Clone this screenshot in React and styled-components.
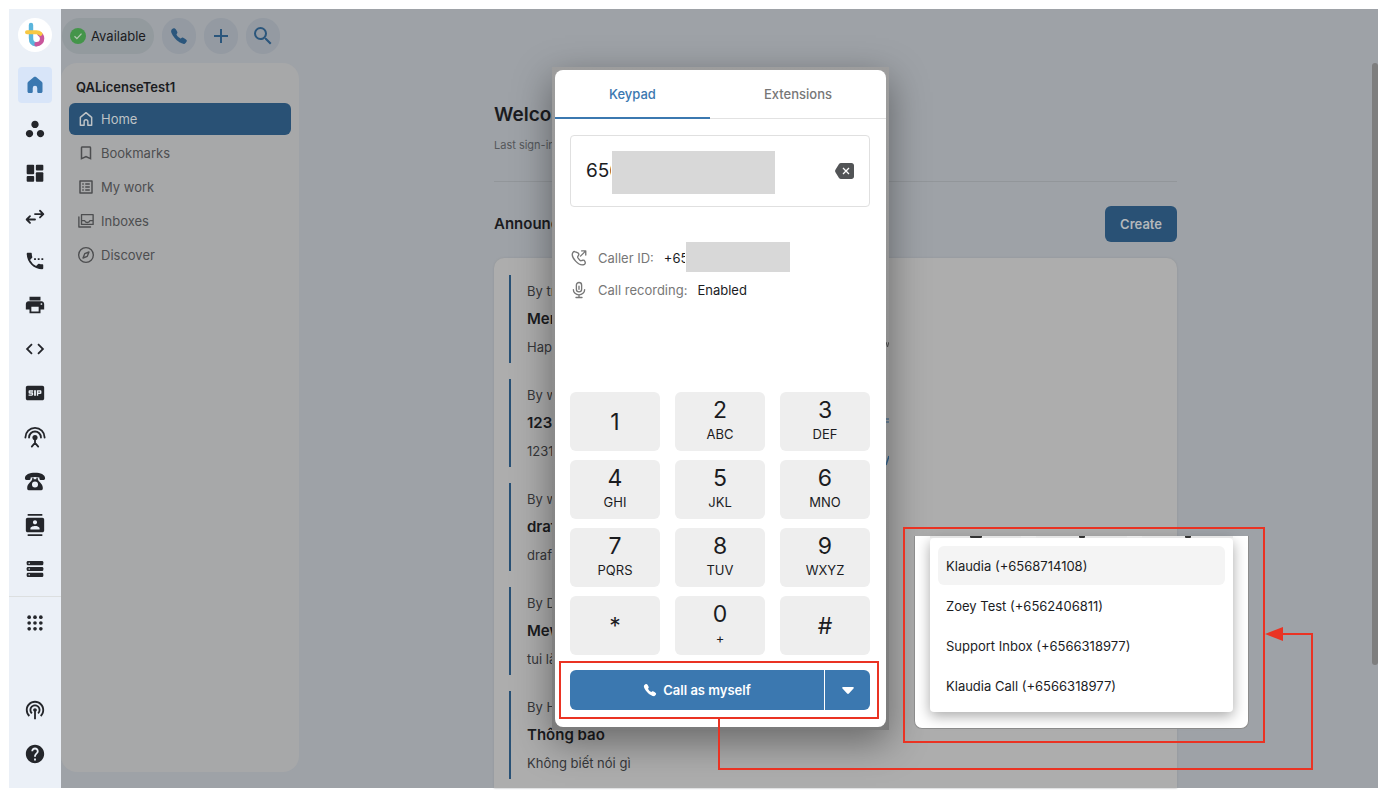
import { useState } from "react";
import styled, { createGlobalStyle, css } from "styled-components";
import {
  MdWorkspaces,
  MdSettingsPhone,
  MdPrint,
  MdCode,
  MdSip,
  MdContacts,
  MdPodcasts,
  MdHelp,
  MdAdd,
  MdSearch,
  MdBookmarkBorder,
  MdListAlt,
} from "react-icons/md";
import { IoCall } from "react-icons/io5";

const colors = {
  blue: "#3b78b0",
  dimBlue: "#295175",
  red: "#ea3323",
  rail: "#ebf0f7",
  backdrop: "#9ea2a7",
  panel: "#a7a8a9",
  card: "#adadad",
  ink: "#1b1c1f",
};

const GlobalStyle = createGlobalStyle`
  * {
    box-sizing: border-box;
  }
  body {
    margin: 0;
    background: #fff;
    font-family: Inter, "Liberation Sans", sans-serif;
    font-size: 13px;
    line-height: 20px;
    color: ${colors.ink};
  }
  button, input {
    font: inherit;
    color: inherit;
    border: 0;
    padding: 0;
    background: none;
  }
  button {
    cursor: pointer;
  }
  h1, h2, h3, p, ul, dl, dd {
    margin: 0;
    padding: 0;
  }
  a {
    color: inherit;
    text-decoration: none;
  }
  svg {
    display: block;
    flex: none;
  }
`;

const Page = styled.div`
  display: flex;
  height: 100vh;
  padding: 9px 4px 4px 9px;
`;

/* ---------- icons ---------- */

const Glyph = ({ size = 20, box = 24, children }) => (
  <svg width={size} height={size} viewBox={`0 0 ${box} ${box}`} fill="none" stroke="currentColor" strokeWidth="1.8" strokeLinecap="round" strokeLinejoin="round" aria-hidden="true">
    {children}
  </svg>
);

const Logo = () => (
  <svg width="22" height="26" viewBox="0 0 22 26" fill="none" aria-hidden="true">
    <path d="M7 3v13c0 4 1.800 6 5 6.200" stroke="#5bb5dc" strokeWidth="4.400" strokeLinecap="round" />
    <path d="M15.500 12c1.800 1 2.600 2.600 2.600 4.500 0 3.300-2.300 5.700-5.600 5.700" stroke="#c9569c" strokeWidth="4.400" strokeLinecap="round" />
    <path d="M3 10.200h9.500c1.700 0 3 .5 4 1.600" stroke="#f7c843" strokeWidth="4" strokeLinecap="round" />
  </svg>
);

const HomeSolid = () => (
  <Glyph size={20}>
    <path d="M12 2c.5 0 .9.2 1.300.5l6.800 5.500c.6.5.9 1.100.9 1.800v9.900c0 1-.8 1.800-1.800 1.800h-3.500c-.6 0-1-.4-1-1v-4.800a2.700 2.700 0 0 0-5.400 0v4.800c0 .6-.4 1-1 1H4.800c-1 0-1.800-.8-1.800-1.800V9.800c0-.7.3-1.300.9-1.800l6.800-5.500c.4-.3.8-.5 1.300-.5z" fill="currentColor" stroke="none" />
  </Glyph>
);

const HomeLine = () => (
  <Glyph size={16}>
    <path d="M3.500 9.500 12 2.500l8.500 7V21.500h-5.700v-5.700a2.800 2.800 0 0 0-5.600 0v5.700H3.500z" strokeWidth="2.200" />
  </Glyph>
);

const Tiles = () => (
  <Glyph size={20}>
    <g fill="currentColor" stroke="none">
      <rect x="2" y="2" width="9" height="11.500" rx="1.200" />
      <rect x="13" y="2" width="9" height="7" rx="1.200" />
      <rect x="2" y="15.500" width="9" height="7" rx="1.200" />
      <rect x="13" y="11" width="9" height="11.500" rx="1.200" />
    </g>
  </Glyph>
);

const Disks = () => (
  <Glyph size={20}>
    {[3, 10, 17].map((y) => (
      <g key={y} stroke="none">
        <rect x="2" y={y - 0.500} width="20" height="5" rx="1.500" fill="currentColor" />
        <circle cx="5" cy={y + 2} r="0.900" fill={colors.rail} />
      </g>
    ))}
  </Glyph>
);

const SwapArrows = () => (
  <Glyph size={20}>
    <path d="M12 8.500h9.500M18 4.500l4 4-4 4M12 15H2.500M6 11l-4 4 4 4" strokeWidth="2.200" />
  </Glyph>
);

const Antenna = () => (
  <Glyph size={22}>
    <circle cx="12" cy="12.500" r="2.800" fill="currentColor" stroke="none" />
    <path d="M1.500 12.500a10.500 10.500 0 0 1 21 0M5.500 12.500a6.500 6.500 0 0 1 13 0M12 14v4.500M8.500 22.500 12 18.500l3.500 4" strokeWidth="2" />
  </Glyph>
);

const DeskPhone = () => (
  <Glyph size={22}>
    <path d="M12 3C6 3 1 5 1 9c0 1.200.8 2 2 2h2.500c1 0 1.700-.7 1.700-1.700V8.200c3-.8 6.600-.8 9.600 0v1.100c0 1 .7 1.700 1.700 1.700H21c1.200 0 2-.8 2-2 0-4-5-6-11-6z" fill="currentColor" stroke="none" />
    <path fillRule="evenodd" d="M9 8.500h1.500V10h3V8.500H15V10c1 3 5.500 5 5.500 9v1.500c0 .8-.7 1.500-1.500 1.500H5c-.8 0-1.500-.7-1.500-1.500V19c0-4 4.500-6 5.500-9zm3 4a3.300 3.300 0 1 0 0 6.600 3.300 3.300 0 0 0 0-6.600z" fill="currentColor" stroke="none" />
  </Glyph>
);

const DotGrid = () => (
  <Glyph size={20}>
    {[5, 12, 19].map((y) =>
      [5, 12, 19].map((x) => <circle key={`${x}-${y}`} cx={x} cy={y} r="2.200" fill="currentColor" stroke="none" />)
    )}
  </Glyph>
);

const InboxStack = () => (
  <Glyph size={18}>
    <path d="M6 3.500h15.500v13H6zM6 11.500h4.200c.4 1.500 1.700 2.500 3.500 2.500s3.100-1 3.500-2.500h4.300M2.500 6.500V20h15.500" />
  </Glyph>
);

const CompassLine = () => (
  <Glyph size={18}>
    <circle cx="12" cy="12" r="9.800" />
    <path d="M16 8l-2.300 5.700L8 16l2.300-5.700z" />
  </Glyph>
);

const PhoneOut = () => (
  <Glyph size={18}>
    <path d="M8.300 4.300 7 3.700c-1-.5-2.300-.2-3 .8C1.800 7.800 4 12.500 7.500 16.200s8.300 6 11.700 4.200c1-.6 1.400-1.800 1-2.900l-.5-1.200c-.4-1-1.500-1.600-2.600-1.300l-2 .6c-.7.2-1.400 0-1.900-.5l-2.600-3.300c-.4-.6-.5-1.400-.1-2l1-1.500c.5-1 .3-2-.4-2.700zM14 9.500l7-7M15.500 2.500H21V8" />
  </Glyph>
);

const MicLine = () => (
  <Glyph size={18}>
    <rect x="8.500" y="2" width="7" height="12.500" rx="3.500" />
    <path d="M4.500 11.500a7.500 7 0 0 0 15 0M12 18.500V22M8 22h8M12 7v4" />
  </Glyph>
);

/* ---------- left rail ---------- */

const Rail = styled.nav`
  display: flex;
  flex-direction: column;
  align-items: center;
  flex: none;
  width: 52px;
  padding: 9px 0 16px;
  background: ${colors.rail};
  color: #24262b;
`;

const LogoLink = styled.a`
  display: flex;
  align-items: center;
  justify-content: center;
  width: 34px;
  height: 34px;
  margin-bottom: 15px;
  border-radius: 50%;
  background: #fff;
`;

const RailGroup = styled.div`
  display: flex;
  flex-direction: column;
  align-items: center;
  gap: 8px;
  width: 100%;

  & + & {
    margin-top: 9px;
    padding-top: 8px;
    border-top: 1px solid #dcdfe0;
  }
`;

const RailBottom = styled.div`
  display: flex;
  flex-direction: column;
  gap: 8px;
  margin-top: auto;
`;

const RailButton = styled.button`
  display: flex;
  align-items: center;
  justify-content: center;
  width: 34px;
  height: 36px;
  border-radius: 4px;
  ${(p) =>
    p.$active &&
    css`
      background: #d8e5f9;
      color: ${colors.blue};
    `}
`;

const railItems = [
  ["Home", <HomeSolid />],
  ["Teams", <MdWorkspaces size={22} />],
  ["Dashboard", <Tiles />],
  ["Transfers", <SwapArrows />],
  ["Calls", <MdSettingsPhone size={22} />],
  ["Fax", <MdPrint size={22} />],
  ["Developer", <MdCode size={22} />],
  ["SIP", <MdSip size={22} />],
  ["Broadcast", <Antenna />],
  ["Phones", <DeskPhone />],
  ["Contacts", <MdContacts size={22} />],
  ["Storage", <Disks />],
];

function SideRail() {
  return (
    <Rail>
      <LogoLink href="#" aria-label="Start">
        <Logo />
      </LogoLink>
      <RailGroup>
        {railItems.map(([name, icon], i) => (
          <RailButton key={name} aria-label={name} $active={i === 0}>
            {icon}
          </RailButton>
        ))}
      </RailGroup>
      <RailGroup>
        <RailButton aria-label="Apps">
          <DotGrid />
        </RailButton>
      </RailGroup>
      <RailBottom>
        <RailButton aria-label="Podcast">
          <MdPodcasts size={22} />
        </RailButton>
        <RailButton aria-label="Help">
          <MdHelp size={22} />
        </RailButton>
      </RailBottom>
    </Rail>
  );
}

/* ---------- dimmed workspace ---------- */

const Workspace = styled.div`
  position: relative;
  display: flex;
  flex-direction: column;
  flex: 1;
  min-width: 0;
  background: ${colors.backdrop};
`;

const TopBar = styled.header`
  display: flex;
  align-items: center;
  gap: 8px;
  height: 54px;
  padding-left: 1px;
`;

const StatusButton = styled.button`
  display: flex;
  align-items: center;
  gap: 5px;
  height: 36px;
  padding: 0 8px;
  border-radius: 18px;
  background: #939a9e;
`;

const RoundButton = styled.button`
  display: flex;
  align-items: center;
  justify-content: center;
  width: 34px;
  height: 36px;
  border-radius: 18px;
  background: #949aa2;
  color: #2b567c;
`;

const Body = styled.div`
  display: flex;
  flex: 1;
  min-height: 0;
`;

const Panel = styled.aside`
  flex: none;
  width: 238px;
  margin-bottom: 16px;
  padding: 12px 8px;
  border-radius: 16px;
  background: ${colors.panel};
`;

const PanelTitle = styled.h2`
  margin-bottom: 4px;
  padding: 2px 7px;
  font-size: 13px;
  font-weight: 600;
  line-height: 20px;
`;

const PanelList = styled.ul`
  display: flex;
  flex-direction: column;
  gap: 2px;
  list-style: none;
`;

const PanelLink = styled.a`
  display: flex;
  align-items: center;
  gap: 6px;
  height: 32px;
  padding: 0 8px;
  border-radius: 6px;
  color: ${(p) => (p.$active ? "#bfc3c6" : "#4d4e50")};
  background: ${(p) => (p.$active ? colors.dimBlue : "none")};
`;

const IconSlot = styled.span`
  display: flex;
  justify-content: center;
  flex: none;
  width: 18px;
`;

const Content = styled.main`
  flex: 1;
  display: flex;
  justify-content: center;
  min-width: 0;
`;

const Column = styled.div`
  display: flex;
  flex-direction: column;
  width: 100%;
  max-width: 683px;
  padding-top: 38px;
`;

const Greeting = styled.div`
  padding-bottom: 26px;
  border-bottom: 1px solid #92969a;

  h1 {
    font-size: 19px;
    font-weight: 600;
    line-height: 28px;
  }
  p {
    margin-top: 6px;
    font-size: 11px;
    color: #55585b;
  }
`;

const SectionHead = styled.div`
  display: flex;
  align-items: center;
  justify-content: space-between;
  padding: 24px 0 16px;

  h2 {
    font-size: 15px;
    font-weight: 600;
  }
`;

const CreateButton = styled.button`
  height: 36px;
  padding: 0 15px;
  border-radius: 6px;
  background: ${colors.dimBlue};
  color: #b4b8bb;
  font-weight: 600;
`;

const Feed = styled.div`
  display: flex;
  flex-direction: column;
  flex: 1;
  gap: 16px;
  min-height: 0;
  padding: 17px 16px 0 15px;
  overflow: hidden;
  border-radius: 10px 10px 0 0;
  background: ${colors.card};
  box-shadow: 0 0 2px #8f9296;
`;

const Post = styled.article`
  flex: none;
  padding: 2px 0 2px 16px;
  border-left: 2px solid ${colors.dimBlue};
  line-height: 28px;
  color: #36373a;

  h3 {
    font-size: 15px;
    font-weight: 600;
    line-height: 28px;
    color: ${colors.ink};
  }
`;

const ScrollTrack = styled.div`
  flex: none;
  width: 6px;
`;

const ScrollThumb = styled.div`
  height: 83%;
  border-radius: 3px;
  background: #7e7e7e;
`;

const panelItems = [
  ["Home", <HomeLine />],
  ["Bookmarks", <MdBookmarkBorder size={18} />],
  ["My work", <MdListAlt size={18} />],
  ["Inboxes", <InboxStack />],
  ["Discover", <CompassLine />],
];

const posts = [
  ["By tr", "Mer", "Hap"],
  ["By w", "123", "1231"],
  ["By w", "draf", "draf"],
  ["By D", "Mew", "tui là"],
  ["By H", "Thông báo", "Không biết nói gì"],
];

/* ---------- dialer ---------- */

const Overlay = styled.div`
  position: absolute;
  inset: 0;
  display: flex;
  align-items: center;
  justify-content: center;
  padding-left: 2px;
`;

const DialerFrame = styled.div`
  position: relative;
  padding: 3px;
  background: linear-gradient(#9d9d9d, #8f8f8f 40%, #7c7c7c);
  box-shadow: 0 12px 36px rgba(0, 0, 0, 0.4);
`;

const Dialer = styled.section`
  width: 331px;
  border-radius: 8px;
  background: #fff;
`;

const Tabs = styled.div`
  display: flex;
  border-bottom: 1px solid #e2e2e2;
`;

const Tab = styled.button`
  flex: 1 1 auto;
  height: 49px;
  margin-bottom: -1px;
  border-bottom: 2px solid ${(p) => (p.$active ? colors.blue : "transparent")};
  color: ${(p) => (p.$active ? colors.blue : "#777")};
  font-weight: 500;
`;

const DialerBody = styled.div`
  padding: 16px 16px 17px 15px;
`;

const NumberField = styled.div`
  position: relative;
  display: flex;
  align-items: center;
  justify-content: space-between;
  height: 72px;
  padding: 0 15px;
  border: 1px solid #e0e0e0;
  border-radius: 4px;

  input {
    flex: 1;
    min-width: 0;
    font-size: 19px;
    line-height: 28px;
    outline: 0;
  }
`;

/* grey block that hides the private part of a number */
const Redaction = styled.span`
  position: absolute;
  border-left: 1px solid #fff;
  background: #d8d8d8;
  ${(p) =>
    p.$small
      ? css`
          left: 21px;
          top: -6px;
          width: 105px;
          height: 30px;
        `
      : css`
          left: 40px;
          top: 15px;
          width: 164px;
          height: 43px;
        `}
`;

const CallInfo = styled.dl`
  display: flex;
  flex-direction: column;
  gap: 12px;
  padding: 41px 0 92px;
`;

const InfoRow = styled.div`
  display: flex;
  align-items: center;
  color: #777;

  dt {
    margin: 0 10px;
  }
  dd {
    position: relative;
    color: ${colors.ink};
  }
`;

const KeyGrid = styled.div`
  display: grid;
  grid-template-columns: repeat(3, 1fr);
  gap: 9px 15px;
`;

const Key = styled.button`
  display: flex;
  flex-direction: column;
  align-items: center;
  justify-content: center;
  height: 59px;
  border-radius: 6px;
  background: #eee;
  font-size: 23px;
  line-height: 24px;

  small {
    font-size: 13px;
    line-height: 24px;
  }
`;

const CallBar = styled.div`
  position: relative;
  display: flex;
  gap: 1px;
  margin-top: 15px;
`;

const CallButton = styled.button`
  display: flex;
  align-items: center;
  justify-content: center;
  gap: 6px;
  flex: 1;
  height: 40px;
  border-radius: 6px 0 0 6px;
  background: ${colors.blue};
  color: #fff;
  font-weight: 600;
`;

const CaretButton = styled(CallButton)`
  flex: none;
  width: 45px;
  border-radius: 0 6px 6px 0;
`;

const CallMark = styled.div`
  position: absolute;
  inset: -9px -9px -9px -11px;
  border: 2px solid ${colors.red};
  pointer-events: none;
`;

const keys = [
  ["1"],
  ["2", "ABC"],
  ["3", "DEF"],
  ["4", "GHI"],
  ["5", "JKL"],
  ["6", "MNO"],
  ["7", "PQRS"],
  ["8", "TUV"],
  ["9", "WXYZ"],
  ["*"],
  ["0", "+"],
  ["#"],
];

/* ---------- caller list callout ---------- */

const Callout = styled.div`
  position: absolute;
  left: calc(100% + 14px);
  bottom: -13px;
  width: 362px;
  padding: 7px 14px 12px 9px;
  border: 2px solid ${colors.red};
`;

const CalloutSheet = styled.div`
  padding: 0 15px 16px;
  border: 1px solid #8c8c8c;
  border-top: 0;
  border-radius: 0 0 8px 8px;
  background: #fff;
`;

const KeyEdges = styled.div`
  display: grid;
  grid-template-columns: repeat(3, 1fr);
  gap: 15px;
  height: 2px;
`;

const KeyEdge = styled.span`
  display: flex;
  justify-content: center;
  background: #e6e6e6;

  &::after {
    content: "";
    width: ${(p) => p.$mark}px;
    height: 2px;
    border-radius: 0 0 1px 1px;
    background: #333;
  }
`;

const CallerMenu = styled.ul`
  padding: 8px 8px 7px;
  border-radius: 4px;
  background: #fff;
  box-shadow: 0 4px 14px rgba(0, 0, 0, 0.35);
  list-style: none;

  li + li {
    margin-top: 1px;
  }
`;

const CallerOption = styled.button`
  display: block;
  width: 100%;
  height: 39px;
  padding: 0 8px;
  border-radius: 6px;
  text-align: left;
  background: ${(p) => (p.$active ? "#f4f4f4" : "none")};
`;

const Connector = styled.svg`
  position: absolute;
  left: 166px;
  bottom: -41px;
  pointer-events: none;
`;

const callers = [
  "Klaudia (+6568714108)",
  "Zoey Test (+6562406811)",
  "Support Inbox (+6566318977)",
  "Klaudia Call (+6566318977)",
];

const EdgeMarks = styled.svg`
  position: absolute;
  right: 0;
  top: 270px;
`;

function DialerPopup() {
  const [tab, setTab] = useState("Keypad");
  const [number, setNumber] = useState("656");

  return (
    <DialerFrame>
      <EdgeMarks width="3" height="130" viewBox="0 0 3 130" fill="none" aria-hidden="true">
        <path d="M0 5l1.500 5L3 5" stroke="#444" />
        <path d="M0 82h3M0 85h3" stroke={colors.dimBlue} />
        <path d="M0 128l3-9" stroke={colors.dimBlue} strokeWidth="1.500" />
      </EdgeMarks>
      <Dialer role="dialog" aria-label="Dialer">
        <Tabs role="tablist">
          {["Keypad", "Extensions"].map((name) => (
            <Tab key={name} role="tab" aria-selected={tab === name} $active={tab === name} onClick={() => setTab(name)}>
              {name}
            </Tab>
          ))}
        </Tabs>
        <DialerBody>
          <NumberField>
            <input aria-label="Phone number" value={number} onChange={(e) => setNumber(e.target.value)} />
            <Redaction />
            <button aria-label="Delete digit" onClick={() => setNumber(number.slice(0, -1))}>
              <svg width="19" height="16" viewBox="0 0 19 16" fill="none" aria-hidden="true">
                <path d="M6 0h10.500C17.900 0 19 1.100 19 2.500v11c0 1.400-1.100 2.500-2.500 2.500H6c-.8 0-1.500-.4-2-1L.6 9.500c-.7-.9-.7-2.100 0-3L4 1c.5-.6 1.200-1 2-1z" fill="#525456" />
                <path d="M8 5l6 6M14 5l-6 6" stroke="#fff" strokeWidth="1.300" />
              </svg>
            </button>
          </NumberField>
          <CallInfo>
            <InfoRow>
              <PhoneOut />
              <dt>Caller ID:</dt>
              <dd>
                +65
                <Redaction $small />
              </dd>
            </InfoRow>
            <InfoRow>
              <MicLine />
              <dt>Call recording:</dt>
              <dd>Enabled</dd>
            </InfoRow>
          </CallInfo>
          <KeyGrid>
            {keys.map(([digit, letters]) => (
              <Key key={digit} onClick={() => setNumber(number + digit)}>
                {digit}
                {letters && <small>{letters}</small>}
              </Key>
            ))}
          </KeyGrid>
          <CallBar>
            <CallButton>
              <IoCall size={14} />
              Call as myself
            </CallButton>
            <CaretButton aria-label="Choose caller">
              <svg width="12" height="7" viewBox="0 0 12 7" aria-hidden="true">
                <path d="M1.200 0h9.600c.9 0 1.300 1 .7 1.600L6.900 6.500c-.5.6-1.300.6-1.800 0L.5 1.600C-.1 1 .3 0 1.200 0z" fill="#fff" />
              </svg>
            </CaretButton>
            <CallMark />
          </CallBar>
        </DialerBody>
      </Dialer>
      <Callout>
        <CalloutSheet>
          <KeyEdges>
            <KeyEdge $mark={12} />
            <KeyEdge $mark={6} />
            <KeyEdge $mark={6} />
          </KeyEdges>
          <CallerMenu>
            {callers.map((name, i) => (
              <li key={name}>
                <CallerOption $active={i === 0}>{name}</CallerOption>
              </li>
            ))}
          </CallerMenu>
        </CalloutSheet>
      </Callout>
      <Connector width="596" height="144" viewBox="0 0 596 144" fill="none" aria-hidden="true">
        <path d="M1 91v51h593V7H560" stroke={colors.red} strokeWidth="2" />
        <path d="M547 7l18-7v14z" fill={colors.red} />
      </Connector>
    </DialerFrame>
  );
}

export default function App() {
  return (
    <Page>
      <GlobalStyle />
      <SideRail />
      <Workspace>
        <TopBar>
          <StatusButton>
            <svg width="16" height="16" viewBox="0 0 16 16" fill="none" aria-hidden="true">
              <circle cx="8" cy="8" r="8" fill="#44954a" />
              <path d="M4.500 8.300l2.400 2.300 4.600-5" stroke="#b4c8b4" strokeWidth="1.300" />
            </svg>
            Available
          </StatusButton>
          <RoundButton aria-label="Call">
            <IoCall size={18} />
          </RoundButton>
          <RoundButton aria-label="Add">
            <MdAdd size={24} />
          </RoundButton>
          <RoundButton aria-label="Search">
            <MdSearch size={24} />
          </RoundButton>
        </TopBar>
        <Body>
          <Panel>
            <PanelTitle>QALicenseTest1</PanelTitle>
            <PanelList>
              {panelItems.map(([name, icon], i) => (
                <li key={name}>
                  <PanelLink href="#" $active={i === 0}>
                    <IconSlot>{icon}</IconSlot>
                    {name}
                  </PanelLink>
                </li>
              ))}
            </PanelList>
          </Panel>
          <Content>
            <Column>
              <Greeting>
                <h1>Welcome</h1>
                <p>Last sign-in</p>
              </Greeting>
              <SectionHead>
                <h2>Announc</h2>
                <CreateButton>Create</CreateButton>
              </SectionHead>
              <Feed>
                {posts.map(([author, title, text], i) => (
                  <Post key={i}>
                    <p>{author}</p>
                    <h3>{title}</h3>
                    <p>{text}</p>
                  </Post>
                ))}
              </Feed>
            </Column>
          </Content>
          <ScrollTrack>
            <ScrollThumb />
          </ScrollTrack>
        </Body>
        <Overlay>
          <DialerPopup />
        </Overlay>
      </Workspace>
    </Page>
  );
}
